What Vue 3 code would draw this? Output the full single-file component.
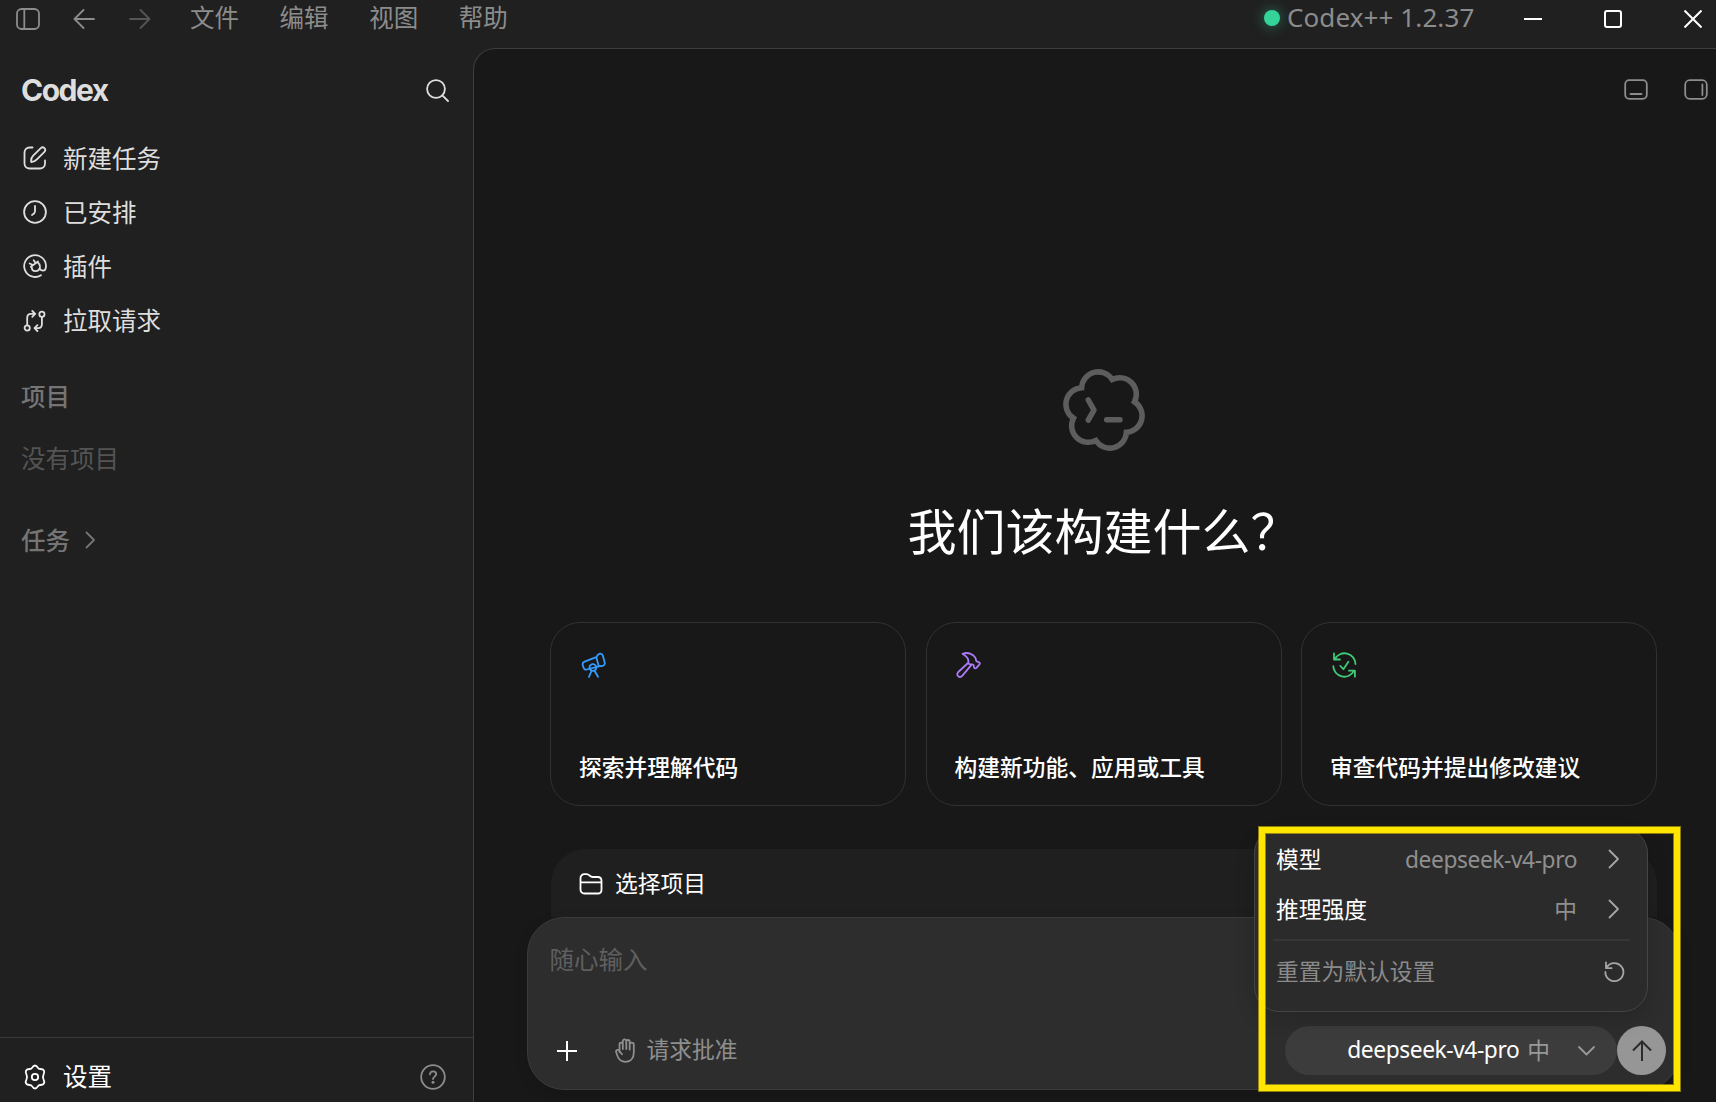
<script setup>
const menus = ['文件', '编辑', '视图', '帮助']
const nav = [
  { id: 'compose', label: '新建任务' },
  { id: 'clock', label: '已安排' },
  { id: 'plugin', label: '插件' },
  { id: 'pull', label: '拉取请求' },
]
const cards = [
  { id: 'telescope', label: '探索并理解代码' },
  { id: 'hammer', label: '构建新功能、应用或工具' },
  { id: 'review', label: '审查代码并提出修改建议' },
]
</script>

<template>
  <div class="window">
    <header class="titlebar">
      <div class="title-left">
        <svg class="ic toggle" width="24" height="22" viewBox="0 0 24 22"><rect x="1" y="1" width="22" height="20" rx="4.5" /><path d="M8.3 1v20" /></svg>
        <svg class="ic back" width="22" height="20" viewBox="0 0 22 20"><path d="M21 10H2M10.500 1L1.500 10l9 9" /></svg>
        <svg class="ic forward" width="22" height="20" viewBox="0 0 22 20"><path d="M1 10h19M11.500 1l9 9-9 9" /></svg>
        <nav class="menus"><span v-for="m in menus" :key="m">{{ m }}</span></nav>
      </div>
      <div class="title-right">
        <i class="status"></i>
        <span class="version">Codex++ 1.2.37</span>
        <div class="controls">
          <svg width="18" height="18" viewBox="0 0 18 18"><path d="M0 9h18" /></svg>
          <svg width="18" height="18" viewBox="0 0 18 18"><rect x="1" y="1" width="16" height="16" rx="2" /></svg>
          <svg width="18" height="18" viewBox="0 0 18 18"><path d="M.5.5l17 17M17.500.5l-17 17" /></svg>
        </div>
      </div>
    </header>

    <div class="body">
      <aside class="sidebar">
        <div class="brand">
          <span>Codex</span>
          <svg class="ic" width="23" height="23" viewBox="0 0 23 23"><circle cx="10" cy="10" r="8.900" /><path d="M16.300 16.300l5.700 5.700" /></svg>
        </div>
        <div class="nav">
          <div v-for="n in nav" :key="n.id" class="nav-item">
            <svg v-if="n.id === 'compose'" class="ic" width="24" height="24" viewBox="0 0 24 24">
              <path d="M9.500 1.500H6.500A5 5 0 0 0 1.500 6.500V17.500a5 5 0 0 0 5 5H17a5 5 0 0 0 5-5V14.500" />
              <path d="M8.200 16c-.4-2.700.3-4.600 2-6.300l7.600-7.500a2.500 2.500 0 0 1 3.600 3.600l-7.500 7.500c-1.600 1.700-3.300 2.700-5.700 2.700z" />
            </svg>
            <svg v-else-if="n.id === 'clock'" class="ic" width="24" height="24" viewBox="0 0 24 24"><circle cx="12" cy="12" r="10.900" /><path d="M12 6v5.500c0 1.300-1.300 2.500-3 3.500" /></svg>
            <svg v-else-if="n.id === 'plugin'" class="ic" width="24" height="24" viewBox="0 0 24 24">
              <path d="M18 21.200a10.900 10.900 0 1 1 5-9.200c0 2.900-1.100 4.600-3 4.600-1.400 0-2.400-.6-3.300-1.700" />
              <path d="M7.800 12.700l7.200-5.200M8.700 12.300c-.3 3.600 1.500 4.900 3.700 4.900 2.500 0 4.400-1.900 4.600-4.300.1-1.800-.8-3.500-2.600-4.900M6.600 9.500l3.300 1.500M10.700 6.200l2 3" />
            </svg>
            <svg v-else class="ic" width="24" height="24" viewBox="0 0 24 24">
              <circle cx="4.200" cy="20" r="2.600" /><circle cx="18.900" cy="6.200" r="2.600" />
              <path d="M4.200 17.300V9.800c0-2.500 1.200-3.900 3.700-3.900h3.600M9.300 3l2.900 2.900-2.900 2.900M18.900 8.900v7.300c0 2.500-1.200 3.900-3.700 3.900h-3M14.400 17.200l-2.900 2.900 2.900 2.900" />
            </svg>
            <span>{{ n.label }}</span>
          </div>
        </div>
        <div class="section">项目</div>
        <div class="empty">没有项目</div>
        <div class="section tasks">
          <span>任务</span>
          <svg class="ic" width="11" height="18" viewBox="0 0 11 18"><path d="M1.500 1.500L9 9l-7.500 7.500" /></svg>
        </div>
        <footer class="settings">
          <svg class="ic" width="24" height="26" viewBox="0 0 24 26">
            <path d="M9.200 3.600C10 2.200 10.800 1.500 12 1.500s2 .7 2.800 2.100c.6 1 1.300 1.400 2.500 1.400 1.800 0 2.900.3 3.600 1.500s.6 2.200-.3 3.800c-.6 1.200-.6 4.200 0 5.400.9 1.500 1 2.600.3 3.800s-1.800 1.500-3.600 1.500c-1.200 0-1.900.4-2.500 1.400-.8 1.400-1.600 2.100-2.800 2.100s-2-.7-2.800-2.100c-.6-1-1.300-1.400-2.500-1.400-1.800 0-2.900-.3-3.600-1.500s-.6-2.300.3-3.800c.6-1.200.6-4.200 0-5.400-.9-1.600-1-2.600-.3-3.800S4.900 5 6.700 5c1.200 0 1.900-.4 2.500-1.400z" />
            <circle cx="12" cy="13" r="3.200" />
          </svg>
          <span>设置</span>
          <svg class="ic help" width="26" height="26" viewBox="0 0 26 26"><circle cx="13" cy="13" r="11.800" /><path d="M9.900 10.400c.2-2 1.500-3 3.200-3s3.100 1.100 3.100 2.700c0 2.500-3.200 2.500-3.200 5" /><circle class="dot" cx="13" cy="18.300" r="1.500" /></svg>
        </footer>
      </aside>

      <main class="main">
        <div class="panel-tools">
          <svg class="ic" width="24" height="21" viewBox="0 0 24 21"><rect x="1.200" y="1.200" width="21.600" height="18.600" rx="4" /><path d="M6.500 15h11" /></svg>
          <svg class="ic" width="24" height="21" viewBox="0 0 24 21"><rect x="1.200" y="1.200" width="21.600" height="18.600" rx="4.500" /><path d="M18.400 5.500v10.500" /></svg>
        </div>

        <div class="content">
          <svg class="logo" width="84" height="84" viewBox="-42 -42 84 84">
            <path d="M8.180-30.520A16.600 16.600 0 0 1 30.520-8.180A16.600 16.600 0 0 1 22.340 22.340A16.600 16.600 0 0 1-8.180 30.520A16.600 16.600 0 0 1-30.520 8.180A16.600 16.600 0 0 1-22.340-22.340A16.600 16.600 0 0 1 8.180-30.520z" />
            <path class="round" d="M-15.700-10L-10 .2l-5.700 9.800M2.700 9.700H16" />
          </svg>
          <h1>我们该构建什么？</h1>

          <section class="cards">
            <article v-for="c in cards" :key="c.id" class="card" :class="c.id">
              <svg v-if="c.id === 'telescope'" class="ic" width="25" height="26" viewBox="0 0 25 26">
                <path d="M15.300 5.200L3.600 9.700c-1.600.6-2.300 2-1.800 3.600l.8 2.500c.5 1.500 1.700 2.200 3.200 1.700l12-3.200M15.300 5.200l1.500-2.300c1.400-2 4.300-1.600 5 .6l1.900 6.900c.6 2.300-1.300 3.900-3.500 3.600l-2.400.3zM8.700 16.600a3.400 3.400 0 1 1 6.600-1.200 3.400 3.400 0 0 1-6.600 1.200zM10.700 18.500L8 24.800M13.400 18.500L17 24.800" />
              </svg>
              <svg v-else-if="c.id === 'hammer'" class="ic" width="26" height="26" viewBox="0 0 26 26">
                <path d="M6.500 1.800C12-.2 17 1.800 19.300 5.600c.8 1.300.3 2.600 1.100 3.500.8.900 2.100.6 2.900 1.400.7.700.6 1.500 0 2.200l-2.900 3.100c-.8.800-1.700.7-2.200-.1-.7-1.100-.1-2.200-1-3-1-.9-2.300.2-3.600-.5l-1.500-1.200c1.300-3.700-.7-6.300-5.600-9.200zM12 11L2.300 20c-2.700 2.900 1.100 6.600 3.900 3.900l9.200-11" />
              </svg>
              <svg v-else class="ic" width="25" height="26" viewBox="0 0 25 26">
                <path d="M23.500 12A10.900 10.900 0 0 0 2.900 7.200M2 1.500v6h6M1.300 14.200a10.900 10.900 0 0 0 20.600 4.600M22.900 24.700v-6h-6M8.400 14l3 3.200 5-7.500" />
              </svg>
              <span>{{ c.label }}</span>
            </article>
          </section>

          <section class="dock">
            <div class="project">
              <svg class="ic" width="24" height="22" viewBox="0 0 24 22"><path d="M1.500 9.300V5c0-2.200 1.600-3.800 3.800-3.800h2.400c2.700 0 3 2.800 6 2.800h5c2.200 0 3.800 1.600 3.800 3.800v8.900c0 2.200-1.600 3.800-3.800 3.800H5.300a3.800 3.800 0 0 1-3.800-3.800zM1.500 9.300h21" /></svg>
              <span>选择项目</span>
            </div>
            <div class="composer">
              <div class="placeholder">随心输入</div>
              <div class="tools">
                <svg class="plus" width="20" height="20" viewBox="0 0 20 20"><path d="M10 0v20M0 10h20" /></svg>
                <div class="approval">
                  <svg class="ic" width="21" height="25" viewBox="0 0 21 25"><path d="M4.500 14V6.300c0-2.300 3.300-2.300 3.300 0V11M7.800 6.300V3.200c0-2.500 3.500-2.500 3.500 0V11M11.300 3.700c0-2.300 3.400-2.300 3.400 0v8M14.700 6.500c0-2.500 4.100-2.500 4.100 0v8c0 5.600-3 9.300-8.400 9.300-4.200 0-6.500-2-7.800-5.500l-1.400-4.100c-.7-2.300 1.900-3 3-1.500L7 16.300" /></svg>
                  <span>请求批准</span>
                </div>
                <div class="model-pill">
                  <span class="latin">deepseek-v4-pro</span>
                  <span class="level">中</span>
                  <svg class="ic" width="17" height="10" viewBox="0 0 17 10"><path d="M1 1l7.500 7.500L16 1" /></svg>
                </div>
                <button class="send"><svg width="20" height="22" viewBox="0 0 20 22"><path d="M10 21V2M1 10.500l9-9 9 9" /></svg></button>
              </div>
            </div>
          </section>
        </div>
      </main>
    </div>

    <div class="popup">
      <div class="row">
        <span>模型</span>
        <span class="value latin">deepseek-v4-pro</span>
        <svg class="ic" width="12" height="20" viewBox="0 0 12 20"><path d="M1.500 1.500L10 10l-8.500 8.500" /></svg>
      </div>
      <div class="row">
        <span>推理强度</span>
        <span class="value">中</span>
        <svg class="ic" width="12" height="20" viewBox="0 0 12 20"><path d="M1.500 1.500L10 10l-8.500 8.500" /></svg>
      </div>
      <hr />
      <div class="row reset">
        <span>重置为默认设置</span>
        <svg class="ic" width="21" height="21" viewBox="0 0 21 21"><path d="M2 1.500v5.700h5.600M2.400 7A9 9 0 1 1 1.400 11" /></svg>
      </div>
    </div>
    <div class="highlight"></div>
  </div>
</template>

<style>
html,
body {
  background: #202020;
  overflow: hidden;
}
</style>

<style scoped>
* {
  box-sizing: border-box;
}
.window {
  position: relative;
  width: 1716px;
  height: 1102px;
  display: flex;
  flex-direction: column;
  background: #202020;
  color: #dedede;
  font-family: 'Noto Sans CJK SC', 'Noto Sans', sans-serif;
  font-size: 24.5px;
  line-height: 36px;
  overflow: hidden;
}
svg {
  display: block;
  flex: none;
  fill: none;
  stroke: currentColor;
}
.ic {
  stroke-width: 1.8;
  stroke-linecap: round;
  stroke-linejoin: round;
}
.titlebar {
  height: 48px;
  flex: none;
  display: flex;
  justify-content: space-between;
  color: #8c8c8c;
}
.title-left,
.title-right,
.controls {
  display: flex;
  align-items: center;
  height: 37px;
}
.title-left {
  padding-left: 16px;
}
.back {
  margin-left: 33px;
}
.forward {
  margin-left: 34px;
  color: #555;
}
.menus {
  display: flex;
  gap: 40.6px;
  margin-left: 39px;
  padding-bottom: 3px;
}
.title-right {
  padding-right: 14px;
}
.status {
  width: 16px;
  height: 16px;
  margin-bottom: 2px;
  border-radius: 50%;
  background: #34d399;
  box-shadow: 0 0 14px rgba(52, 211, 153, 0.5);
}
.version {
  width: 244px;
  padding: 0 0 4px 7px;
  font-family: 'Noto Sans', sans-serif;
  font-size: 26px;
  letter-spacing: 0.1px;
  white-space: nowrap;
}
.controls {
  gap: 62px;
  padding-top: 1px;
  color: #fff;
  stroke-width: 2;
}
.body {
  flex: 1;
  display: flex;
  min-height: 0;
}
.sidebar {
  width: 473px;
  flex: none;
  display: flex;
  flex-direction: column;
}
.brand {
  height: 83px;
  padding: 2px 24px 0 21px;
  display: flex;
  align-items: center;
  justify-content: space-between;
  font-family: Inter, 'Liberation Sans', sans-serif;
  font-size: 30px;
  font-weight: 700;
  letter-spacing: -1.5px;
}
.brand span {
  margin-bottom: 1px;
}
.nav-item {
  height: 54px;
  padding-left: 23px;
  display: flex;
  align-items: center;
  gap: 16px;
}
.section {
  margin-top: 31px;
  padding-left: 21px;
  height: 36px;
  font-weight: 500;
  color: #757575;
}
.empty {
  margin-top: 26px;
  padding-left: 21px;
  height: 36px;
  color: #545454;
}
.tasks {
  margin-top: 46px;
  display: flex;
  align-items: center;
  gap: 15px;
}
.settings {
  margin-top: auto;
  height: 65px;
  padding: 14px 27px 0 23px;
  border-top: 1px solid #393939;
  display: flex;
  align-items: center;
  gap: 16px;
  color: #fff;
}
.settings span {
  margin-bottom: 2px;
}
.help {
  margin-left: auto;
  color: #8c8c8c;
}
.help .dot {
  fill: currentColor;
  stroke: none;
}
.main {
  flex: 1;
  min-width: 0;
  border: solid #3d3d3d;
  border-width: 1px 0 0 1px;
  border-top-left-radius: 22px;
  background: #181818;
  display: flex;
  flex-direction: column;
}
.panel-tools {
  display: flex;
  justify-content: flex-end;
  gap: 36px;
  padding: 29.5px 8px 0.5px 0;
  color: #8c8c8c;
}
.content {
  width: 1153px;
  margin-left: 53px;
  flex: 1;
  display: flex;
  flex-direction: column;
  align-items: center;
}
.logo {
  margin-top: 268px;
  color: #5d5d5d;
  stroke-width: 5.5;
}
.round {
  stroke-linecap: round;
  stroke-linejoin: round;
}
h1 {
  margin: 41px 0 2px;
  height: 72px;
  font-size: 49px;
  line-height: 72px;
  font-weight: 400;
  color: #fff;
}
.cards {
  margin-top: 55px;
  width: 1107px;
  display: flex;
  gap: 19.5px;
}
.card {
  width: 356px;
  flex: none;
  height: 184px;
  padding: 29px 28px 20px;
  border: 1px solid #313131;
  border-radius: 30px;
  display: flex;
  flex-direction: column;
  justify-content: space-between;
  font-size: 22.75px;
  font-weight: 500;
  color: #fff;
}
.card svg {
  margin-left: 1.5px;
}
.telescope svg {
  color: #339cff;
}
.hammer svg {
  color: #ad7bf9;
}
.review svg {
  color: #40c977;
}
.dock {
  margin-top: 43px;
  width: 1153px;
  display: flex;
  flex-direction: column;
  align-items: center;
}
.project {
  width: 1106px;
  height: 68px;
  padding: 1px 0 0 28px;
  border-radius: 35px 35px 0 0;
  background: #1f1f1f;
  display: flex;
  align-items: center;
  gap: 12.5px;
  font-size: 22.75px;
  color: #fff;
}
.project span {
  margin-bottom: 2px;
}
.composer {
  width: 1153px;
  height: 173px;
  padding: 23px 13px 14px 22px;
  border: 1px solid #3b3b3b;
  border-radius: 37px;
  background: #2d2d2d;
  box-shadow: 0 4px 14px rgba(0, 0, 0, 0.12);
  display: flex;
  flex-direction: column;
  justify-content: space-between;
}
.placeholder {
  margin-left: -0.5px;
  color: #5f5f5f;
}
.tools {
  display: flex;
  align-items: center;
  height: 49px;
  font-size: 22.75px;
}
.plus {
  margin-left: 7px;
  color: #fff;
  stroke-width: 2;
}
.approval {
  margin-left: 38px;
  display: flex;
  align-items: center;
  gap: 10.5px;
  color: #8f8f8f;
}
.approval span {
  margin-bottom: 3px;
}
.model-pill {
  margin-left: auto;
  width: 332px;
  height: 49px;
  padding: 0 22px 0 0;
  border-radius: 25px;
  background: #3c3c3c;
  color: #989898;
  display: flex;
  align-items: center;
  justify-content: flex-end;
}
.model-pill span {
  margin-bottom: 2px;
}
.model-pill .latin {
  color: #fff;
}
.model-pill .level {
  margin: 0 28px 2px 8px;
}
.latin {
  font-family: 'Noto Sans', sans-serif;
  font-size: 22.75px;
  letter-spacing: -0.42px;
}
.send {
  width: 49px;
  height: 49px;
  padding: 0;
  border: 0;
  border-radius: 50%;
  background: #969696;
  color: #2b2b2b;
  display: grid;
  place-items: center;
  stroke-width: 2;
}
.popup {
  position: absolute;
  left: 1254px;
  top: 828px;
  width: 394px;
  height: 184px;
  padding: 5px 17px 0 18px;
  border: 1px solid #454545;
  border-radius: 25px;
  background: #2b2b2b;
  box-shadow: 0 8px 20px rgba(0, 0, 0, 0.16);
  color: #fff;
  font-size: 22.75px;
}
.row {
  height: 50px;
  padding: 0 10.5px 0 3px;
  display: flex;
  align-items: center;
}
.value {
  margin-left: auto;
  margin-right: 30.5px;
  color: #8f8f8f;
}
.value.latin {
  margin-top: 2px;
}
.row .ic {
  color: #a5a5a5;
}
hr {
  height: 2px;
  margin: 5px 0;
  border: 0;
  background: #363636;
}
.reset {
  justify-content: space-between;
  padding-right: 5px;
  color: #8a8a8a;
}
.highlight {
  position: absolute;
  left: 1259px;
  top: 827px;
  width: 421px;
  height: 264px;
  border: 6px solid #ffe600;
  box-shadow:
    0 0 0 1px rgba(255, 230, 0, 0.5),
    inset 0 0 0 1px rgba(255, 230, 0, 0.5);
}
</style>
